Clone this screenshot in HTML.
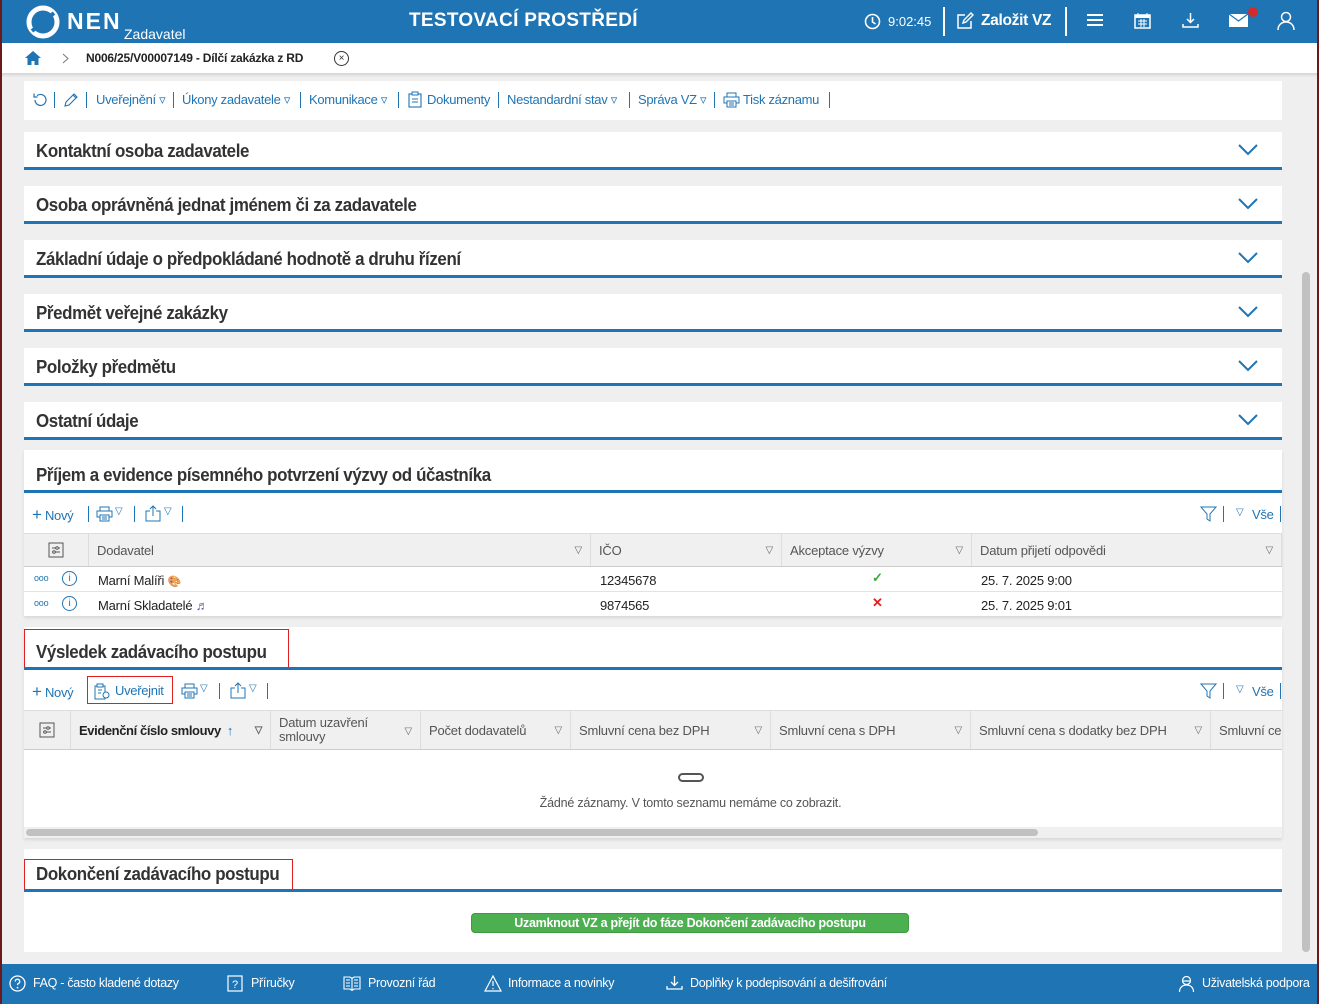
<!DOCTYPE html>
<html><head><meta charset="utf-8">
<style>
*{box-sizing:border-box;margin:0;padding:0}
body{width:1319px;height:1004px;overflow:hidden;background:#efefef;font-family:"Liberation Sans",sans-serif;position:relative;color:#333}
.a{position:absolute}
.hdr{left:0;top:0;width:1319px;height:43px;background:#1f74b4;color:#fff}
.bc{left:0;top:43px;width:1319px;height:30px;background:#fff;box-shadow:0 2px 3px rgba(0,0,0,.12)}
.panel{position:absolute;left:24px;width:1258px;background:#fff}
.ttl{position:absolute;left:12px;font-size:18px;font-weight:bold;color:#333;letter-spacing:-0.4px;transform:scaleX(.94);transform-origin:left}
.line{position:absolute;left:0;width:1258px;height:3px;background:#1f74b4}
.chev{position:absolute;right:24px;width:20px;height:12px}
.t{position:absolute;color:#1f74b4;font-size:13px;letter-spacing:-0.3px;white-space:nowrap}
.s{position:absolute;width:1px;height:16px;background:#1f74b4}
.th{position:absolute;height:100%;border-right:1px solid #ddd;font-size:13px;color:#555;padding-left:8px;display:flex;align-items:center;letter-spacing:-0.2px}
.tri{position:absolute;right:8px;font-size:10px;color:#666}
.cell{position:absolute;font-size:13px;color:#222;letter-spacing:-0.2px}
.foot{left:0;top:964px;width:1319px;height:40px;background:#1f74b4;color:#fff;font-size:12.5px}
.fi{position:absolute;top:12px;letter-spacing:-0.3px;white-space:nowrap}
.fs{position:absolute;top:11px}
.red{position:absolute;border:1px solid #e02020}
</style></head><body>
<div class="a" style="left:0;top:0;width:2px;height:1004px;background:#6a1a1a;z-index:9"></div>
<div class="a" style="right:0;top:0;width:2px;height:1004px;background:#6a1a1a;z-index:9"></div>

<div class="a hdr">
 <svg class="a" style="left:26px;top:5px" width="34" height="34" viewBox="0 0 34 34"><circle cx="17" cy="17" r="14" fill="none" stroke="#fff" stroke-width="5"/><path d="M6 26 L28 8" stroke="#1f74b4" stroke-width="4"/></svg>
 <div class="a" style="left:67px;top:8px;font-size:23px;font-weight:bold;letter-spacing:2px">NEN</div>
 <div class="a" style="left:124px;top:26px;font-size:14px">Zadavatel</div>
 <div class="a" style="left:409px;top:10px;font-size:19px;font-weight:bold;letter-spacing:0.3px">TESTOVACÍ PROSTŘEDÍ</div>
 <svg class="a" style="left:864px;top:13px" width="17" height="17" viewBox="0 0 17 17"><circle cx="8.5" cy="8.5" r="7" fill="none" stroke="#fff" stroke-width="1.6"/><path d="M8.5 4v5l3 2" fill="none" stroke="#fff" stroke-width="1.6"/></svg>
 <div class="a" style="left:888px;top:14px;font-size:13px">9:02:45</div>
 <div class="a" style="left:943px;top:7px;width:2px;height:29px;background:#fff"></div>
 <svg class="a" style="left:956px;top:12px" width="18" height="18" viewBox="0 0 18 18"><path d="M9 3H2v13h13V9" fill="none" stroke="#fff" stroke-width="1.5"/><path d="M7 11l1-3 7-7 2 2-7 7z" fill="none" stroke="#fff" stroke-width="1.4"/></svg>
 <div class="a" style="left:981px;top:12px;font-size:15.5px;font-weight:bold;letter-spacing:-0.3px">Založit VZ</div>
 <div class="a" style="left:1065px;top:7px;width:2px;height:29px;background:#fff"></div>
 <div class="a" style="left:1087px;top:14px;width:16px;height:2px;background:#fff;box-shadow:0 5px 0 #fff,0 10px 0 #fff"></div>
 <svg class="a" style="left:1134px;top:12px" width="17" height="17" viewBox="0 0 17 17"><rect x="1" y="3" width="15" height="13" fill="none" stroke="#fff" stroke-width="1.5"/><rect x="1" y="3" width="15" height="3" fill="#fff"/><path d="M4 1v3M13 1v3M4 9h9M4 12h9M7 7v8M10 7v8" stroke="#fff"/></svg>
 <svg class="a" style="left:1182px;top:12px" width="17" height="17" viewBox="0 0 17 17"><path d="M8.5 1v9M5 7l3.5 3.5L12 7M1 12v3h15v-3" fill="none" stroke="#fff" stroke-width="1.5"/></svg>
 <svg class="a" style="left:1229px;top:14px" width="19" height="13" viewBox="0 0 19 13"><rect x="0" y="0" width="19" height="13" fill="#fff"/><path d="M0 0l9.5 7L19 0" fill="none" stroke="#1f74b4" stroke-width="1.3"/></svg>
 <div class="a" style="left:1248px;top:7px;width:10px;height:10px;border-radius:50%;background:#d12b2b"></div>
 <svg class="a" style="left:1277px;top:11px" width="18" height="19" viewBox="0 0 18 19"><circle cx="9" cy="6" r="4.5" fill="none" stroke="#fff" stroke-width="1.5"/><path d="M1 19c0-5 3.5-8 8-8s8 3 8 8" fill="none" stroke="#fff" stroke-width="1.5"/></svg>
</div>

<div class="a bc">
 <svg class="a" style="left:24px;top:7px" width="18" height="16" viewBox="0 0 18 16"><path d="M9 1L1 8h2.5v7h4v-4h3v4h4V8H17z" fill="#1f74b4"/></svg>
 <svg class="a" style="left:62px;top:10px" width="7" height="11" viewBox="0 0 7 11"><path d="M1 1l5 4.5L1 10" fill="none" stroke="#777"/></svg>
 <div class="a" style="left:86px;top:8px;font-size:12px;font-weight:bold;color:#222;letter-spacing:-0.2px">N006/25/V00007149 - Dílčí zakázka z RD</div>
 <div class="a" style="left:334px;top:8px;width:15px;height:15px;border:1px solid #333;border-radius:50%;font-size:10px;text-align:center;line-height:13px">×</div>
</div>

<div class="panel" style="top:81px;height:39px">
 <svg class="a" style="left:8px;top:11px" width="16" height="16" viewBox="0 0 16 16"><path d="M3 8a5.5 5.5 0 1 0 2-4.3M2 1.5v3.5h3.5" fill="none" stroke="#1f74b4" stroke-width="1.2"/></svg>
 <div class="s" style="left:30px;top:11px"></div>
 <svg class="a" style="left:39px;top:11px" width="16" height="16" viewBox="0 0 16 16"><path d="M2 14l1-4 8-8 3 3-8 8z M10 3l3 3" fill="none" stroke="#1f74b4" stroke-width="1.1"/></svg>
 <div class="s" style="left:62px;top:11px"></div>
 <div class="t" style="left:72px;top:11px">Uveřejnění ▿</div>
 <div class="s" style="left:149px;top:11px"></div>
 <div class="t" style="left:158px;top:11px">Úkony zadavatele ▿</div>
 <div class="s" style="left:276px;top:11px"></div>
 <div class="t" style="left:285px;top:11px">Komunikace ▿</div>
 <div class="s" style="left:374px;top:11px"></div>
 <svg class="a" style="left:384px;top:10px" width="14" height="17" viewBox="0 0 14 17"><rect x="1" y="3" width="12" height="13" fill="none" stroke="#1f74b4" stroke-width="1.1"/><rect x="4" y="1" width="6" height="3" fill="#fff" stroke="#1f74b4"/><path d="M4 8h6M4 11h6" stroke="#1f74b4"/></svg>
 <div class="t" style="left:403px;top:11px">Dokumenty</div>
 <div class="s" style="left:474px;top:11px"></div>
 <div class="t" style="left:483px;top:11px">Nestandardní stav ▿</div>
 <div class="s" style="left:605px;top:11px"></div>
 <div class="t" style="left:614px;top:11px">Správa VZ ▿</div>
 <div class="s" style="left:690px;top:11px"></div>
 <svg class="a" style="left:699px;top:11px" width="17" height="16" viewBox="0 0 17 16"><rect x="4" y="1" width="9" height="4" fill="none" stroke="#1f74b4"/><rect x="1" y="5" width="15" height="6" fill="none" stroke="#1f74b4"/><rect x="4" y="9" width="9" height="6" fill="#fff" stroke="#1f74b4"/><path d="M6 11h5M6 13h5" stroke="#1f74b4"/></svg>
 <div class="t" style="left:719px;top:11px">Tisk záznamu</div>
 <div class="s" style="left:805px;top:11px"></div>
</div>

<div class="panel" style="top:132px;height:38px"><div class="ttl" style="top:9px">Kontaktní osoba zadavatele</div><svg class="chev" style="top:12px" viewBox="0 0 20 12"><path d="M1 1l9 9 9-9" fill="none" stroke="#1f74b4" stroke-width="2"/></svg><div class="line" style="top:35px"></div></div>
<div class="panel" style="top:186px;height:38px"><div class="ttl" style="top:9px">Osoba oprávněná jednat jménem či za zadavatele</div><svg class="chev" style="top:12px" viewBox="0 0 20 12"><path d="M1 1l9 9 9-9" fill="none" stroke="#1f74b4" stroke-width="2"/></svg><div class="line" style="top:35px"></div></div>
<div class="panel" style="top:240px;height:38px"><div class="ttl" style="top:9px">Základní údaje o předpokládané hodnotě a druhu řízení</div><svg class="chev" style="top:12px" viewBox="0 0 20 12"><path d="M1 1l9 9 9-9" fill="none" stroke="#1f74b4" stroke-width="2"/></svg><div class="line" style="top:35px"></div></div>
<div class="panel" style="top:294px;height:38px"><div class="ttl" style="top:9px">Předmět veřejné zakázky</div><svg class="chev" style="top:12px" viewBox="0 0 20 12"><path d="M1 1l9 9 9-9" fill="none" stroke="#1f74b4" stroke-width="2"/></svg><div class="line" style="top:35px"></div></div>
<div class="panel" style="top:348px;height:38px"><div class="ttl" style="top:9px">Položky předmětu</div><svg class="chev" style="top:12px" viewBox="0 0 20 12"><path d="M1 1l9 9 9-9" fill="none" stroke="#1f74b4" stroke-width="2"/></svg><div class="line" style="top:35px"></div></div>
<div class="panel" style="top:402px;height:38px"><div class="ttl" style="top:9px">Ostatní údaje</div><svg class="chev" style="top:12px" viewBox="0 0 20 12"><path d="M1 1l9 9 9-9" fill="none" stroke="#1f74b4" stroke-width="2"/></svg><div class="line" style="top:35px"></div></div>

<!-- Příjem -->
<div class="panel" style="top:450px;height:166px;box-shadow:0 2px 3px rgba(0,0,0,.1)">
 <div class="ttl" style="top:15px">Příjem a evidence písemného potvrzení výzvy od účastníka</div>
 <div class="line" style="top:40px"></div>
 <div class="t" style="left:8px;top:55px"><span style="font-size:17px;font-weight:300">+</span> Nový</div>
 <div class="s" style="left:64px;top:56px"></div>
 <svg class="a" style="left:72px;top:56px" width="17" height="16" viewBox="0 0 17 16"><rect x="4" y="1" width="9" height="4" fill="none" stroke="#1f74b4"/><rect x="1" y="5" width="15" height="6" fill="none" stroke="#1f74b4"/><rect x="4" y="9" width="9" height="6" fill="#fff" stroke="#1f74b4"/><path d="M6 11h5M6 13h5" stroke="#1f74b4"/></svg>
 <div class="t" style="left:91px;top:56px;font-size:10px">▽</div>
 <div class="s" style="left:110px;top:56px"></div>
 <svg class="a" style="left:121px;top:55px" width="16" height="17" viewBox="0 0 16 17"><path d="M5 6H1v10h14V6h-4M8 11V1M5 4l3-3 3 3" fill="none" stroke="#1f74b4"/></svg>
 <div class="t" style="left:140px;top:56px;font-size:10px">▽</div>
 <div class="s" style="left:158px;top:56px"></div>
 <svg class="a" style="left:1176px;top:56px" width="17" height="16" viewBox="0 0 17 16"><path d="M1 1h15l-6 7v7l-3-2V8z" fill="none" stroke="#1f74b4"/></svg>
 <div class="s" style="left:1199px;top:56px"></div>
 <div class="t" style="left:1212px;top:57px;font-size:10px">▽</div>
 <div class="t" style="left:1228px;top:57px">Vše</div>
 <div class="s" style="left:1256px;top:56px"></div>
 <div class="a" style="left:0;top:83px;width:1258px;height:34px;background:#f0f0f0;border-top:1px solid #ddd;border-bottom:1px solid #ccc">
  <div class="th" style="left:0;width:65px;justify-content:center;padding:0"><svg width="16" height="16" viewBox="0 0 16 16"><rect x="1" y="1" width="14" height="14" fill="none" stroke="#555"/><path d="M4 6h8M4 10h8" stroke="#555"/><circle cx="9" cy="6" r="1.3" fill="#fff" stroke="#555"/><circle cx="6" cy="10" r="1.3" fill="#fff" stroke="#555"/></svg></div>
  <div class="th" style="left:65px;width:502px">Dodavatel<span class="tri">▽</span></div>
  <div class="th" style="left:567px;width:191px">IČO<span class="tri">▽</span></div>
  <div class="th" style="left:758px;width:190px">Akceptace výzvy<span class="tri">▽</span></div>
  <div class="th" style="left:948px;width:310px">Datum přijetí odpovědi<span class="tri">▽</span></div>
 </div>
 <div class="a" style="left:0;top:141px;width:1258px;height:1px;background:#e3e3e3"></div>
 <div class="cell" style="left:10px;top:123px;color:#1f74b4;font-size:9px">ooo</div>
 <div class="cell" style="left:38px;top:121px;width:15px;height:15px;border:1px solid #1f74b4;border-radius:50%;color:#1f74b4;font-size:10px;text-align:center;line-height:13px">i</div>
 <div class="cell" style="left:74px;top:123px">Marní Malíři <span style="color:#e88;font-size:11px">🎨</span></div>
 <div class="cell" style="left:576px;top:123px">12345678</div>
 <div class="cell" style="left:848px;top:120px;color:#3aaa35;font-weight:bold">✓</div>
 <div class="cell" style="left:957px;top:123px">25. 7. 2025 9:00</div>
 <div class="cell" style="left:10px;top:148px;color:#1f74b4;font-size:9px">ooo</div>
 <div class="cell" style="left:38px;top:146px;width:15px;height:15px;border:1px solid #1f74b4;border-radius:50%;color:#1f74b4;font-size:10px;text-align:center;line-height:13px">i</div>
 <div class="cell" style="left:74px;top:148px">Marní Skladatelé <span style="color:#6a5aa8;font-weight:bold">♬</span></div>
 <div class="cell" style="left:576px;top:148px">9874565</div>
 <div class="cell" style="left:848px;top:145px;color:#d22;font-weight:bold">✕</div>
 <div class="cell" style="left:957px;top:148px">25. 7. 2025 9:01</div>
</div>

<!-- Výsledek -->
<div class="panel" style="top:627px;height:211px;box-shadow:0 2px 3px rgba(0,0,0,.1)">
 <div class="red" style="left:0;top:2px;width:265px;height:40px"></div>
 <div class="ttl" style="top:15px">Výsledek zadávacího postupu</div>
 <div class="line" style="top:40px"></div>
 <div class="t" style="left:8px;top:55px"><span style="font-size:17px;font-weight:300">+</span> Nový</div>
 <div class="red" style="left:63px;top:49px;width:86px;height:28px"></div>
 <svg class="a" style="left:70px;top:56px" width="17" height="17" viewBox="0 0 17 17"><rect x="1" y="3" width="10" height="13" fill="none" stroke="#1f74b4"/><rect x="3" y="1" width="6" height="3" fill="#fff" stroke="#1f74b4"/><circle cx="12" cy="12" r="3" fill="#fff" stroke="#1f74b4"/><path d="M4 7h4M4 10h3" stroke="#1f74b4"/></svg>
 <div class="t" style="left:91px;top:56px">Uveřejnit</div>
 <svg class="a" style="left:157px;top:56px" width="17" height="16" viewBox="0 0 17 16"><rect x="4" y="1" width="9" height="4" fill="none" stroke="#1f74b4"/><rect x="1" y="5" width="15" height="6" fill="none" stroke="#1f74b4"/><rect x="4" y="9" width="9" height="6" fill="#fff" stroke="#1f74b4"/><path d="M6 11h5M6 13h5" stroke="#1f74b4"/></svg>
 <div class="t" style="left:176px;top:56px;font-size:10px">▽</div>
 <div class="s" style="left:195px;top:56px"></div>
 <svg class="a" style="left:206px;top:55px" width="16" height="17" viewBox="0 0 16 17"><path d="M5 6H1v10h14V6h-4M8 11V1M5 4l3-3 3 3" fill="none" stroke="#1f74b4"/></svg>
 <div class="t" style="left:225px;top:56px;font-size:10px">▽</div>
 <div class="s" style="left:243px;top:56px"></div>
 <svg class="a" style="left:1176px;top:56px" width="17" height="16" viewBox="0 0 17 16"><path d="M1 1h15l-6 7v7l-3-2V8z" fill="none" stroke="#1f74b4"/></svg>
 <div class="s" style="left:1199px;top:56px"></div>
 <div class="t" style="left:1212px;top:57px;font-size:10px">▽</div>
 <div class="t" style="left:1228px;top:57px">Vše</div>
 <div class="s" style="left:1256px;top:56px"></div>
 <div class="a" style="left:0;top:83px;width:1258px;height:40px;background:#f0f0f0;border-top:1px solid #ddd;border-bottom:1px solid #ccc;overflow:hidden">
  <div class="th" style="left:0;width:47px;justify-content:center;padding:0"><svg width="16" height="16" viewBox="0 0 16 16"><rect x="1" y="1" width="14" height="14" fill="none" stroke="#555"/><path d="M4 6h8M4 10h8" stroke="#555"/><circle cx="9" cy="6" r="1.3" fill="#fff" stroke="#555"/><circle cx="6" cy="10" r="1.3" fill="#fff" stroke="#555"/></svg></div>
  <div class="th" style="left:47px;width:200px;font-weight:bold;color:#222;letter-spacing:-0.4px">Evidenční číslo smlouvy <span style="color:#1f74b4;margin-left:6px;font-weight:normal">↑</span><span class="tri">▽</span></div>
  <div class="th" style="left:247px;width:150px;line-height:14px">Datum uzavření<br>smlouvy<span class="tri" style="top:14px">▽</span></div>
  <div class="th" style="left:397px;width:150px">Počet dodavatelů<span class="tri">▽</span></div>
  <div class="th" style="left:547px;width:200px">Smluvní cena bez DPH<span class="tri">▽</span></div>
  <div class="th" style="left:747px;width:200px">Smluvní cena s DPH<span class="tri">▽</span></div>
  <div class="th" style="left:947px;width:240px">Smluvní cena s dodatky bez DPH<span class="tri">▽</span></div>
  <div class="th" style="left:1187px;width:200px">Smluvní cena</div>
 </div>
 <div class="a" style="left:654px;top:146px;width:26px;height:9px;border:2px solid #555;border-radius:5px"></div>
 <div class="cell" style="left:0;width:1333px;text-align:center;top:169px;color:#555;font-size:12.5px">Žádné záznamy. V tomto seznamu nemáme co zobrazit.</div>
 <div class="a" style="left:0;top:200px;width:1258px;height:11px;background:#f0f0f0"></div>
 <div class="a" style="left:2px;top:202px;width:1012px;height:7px;background:#c1c1c1;border-radius:4px"></div>
</div>

<!-- Dokončení -->
<div class="panel" style="top:849px;height:103px">
 <div class="red" style="left:0;top:10px;width:269px;height:31px"></div>
 <div class="ttl" style="top:15px">Dokončení zadávacího postupu</div>
 <div class="line" style="top:40px"></div>
 <div class="a" style="left:447px;top:64px;width:438px;height:20px;background:#4caf50;border:1px solid #3d9a40;border-radius:4px;color:#fff;font-size:12.5px;font-weight:bold;text-align:center;line-height:18px;letter-spacing:-0.3px">Uzamknout VZ a přejít do fáze Dokončení zadávacího postupu</div>
</div>

<div class="a" style="left:1302px;top:272px;width:8px;height:680px;background:#c1c1c1;border-radius:4px"></div>

<div class="a foot">
 <svg class="fs" style="left:9px" width="17" height="17" viewBox="0 0 17 17"><circle cx="8.5" cy="8.5" r="7.5" fill="none" stroke="#fff" stroke-width="1.3"/><path d="M6.3 6.5a2.2 2.2 0 1 1 3 2c-.7.3-.8.8-.8 1.6" fill="none" stroke="#fff" stroke-width="1.3"/><circle cx="8.5" cy="12.6" r=".9" fill="#fff"/></svg>
 <div class="fi" style="left:33px">FAQ - často kladené dotazy</div>
 <svg class="fs" style="left:227px" width="16" height="17" viewBox="0 0 16 17"><rect x="1" y="1" width="14" height="15" fill="none" stroke="#fff" stroke-width="1.2"/><text x="8" y="13" font-size="11" fill="#fff" text-anchor="middle" font-family="Liberation Sans">?</text></svg>
 <div class="fi" style="left:251px">Příručky</div>
 <svg class="fs" style="left:343px" width="18" height="16" viewBox="0 0 18 16"><path d="M1 2h6l2 1.5L11 2h6v12h-6l-2 1.5L7 14H1z M9 3.5v12M3 5h4M3 8h4M3 11h4M11 5h4M11 8h4M11 11h4" fill="none" stroke="#fff" stroke-width="1.1"/></svg>
 <div class="fi" style="left:368px">Provozní řád</div>
 <svg class="fs" style="left:484px" width="18" height="17" viewBox="0 0 18 17"><path d="M9 1L1 16h16z M9 6v5M9 13v1.2" fill="none" stroke="#fff" stroke-width="1.2"/></svg>
 <div class="fi" style="left:508px">Informace a novinky</div>
 <svg class="fs" style="left:666px" width="17" height="16" viewBox="0 0 17 16"><path d="M8.5 1v9M5 7l3.5 3.5L12 7M1 11v3h15v-3" fill="none" stroke="#fff" stroke-width="1.3"/></svg>
 <div class="fi" style="left:690px">Doplňky k podepisování a dešifrování</div>
 <svg class="fs" style="left:1178px" width="17" height="17" viewBox="0 0 17 17"><circle cx="8.5" cy="5.5" r="4" fill="none" stroke="#fff" stroke-width="1.2"/><path d="M1.5 17c0-4.5 3-7 7-7s7 2.5 7 7M4.5 6h8" fill="none" stroke="#fff" stroke-width="1.2"/></svg>
 <div class="fi" style="left:1202px">Uživatelská podpora</div>
</div>
</body></html>
